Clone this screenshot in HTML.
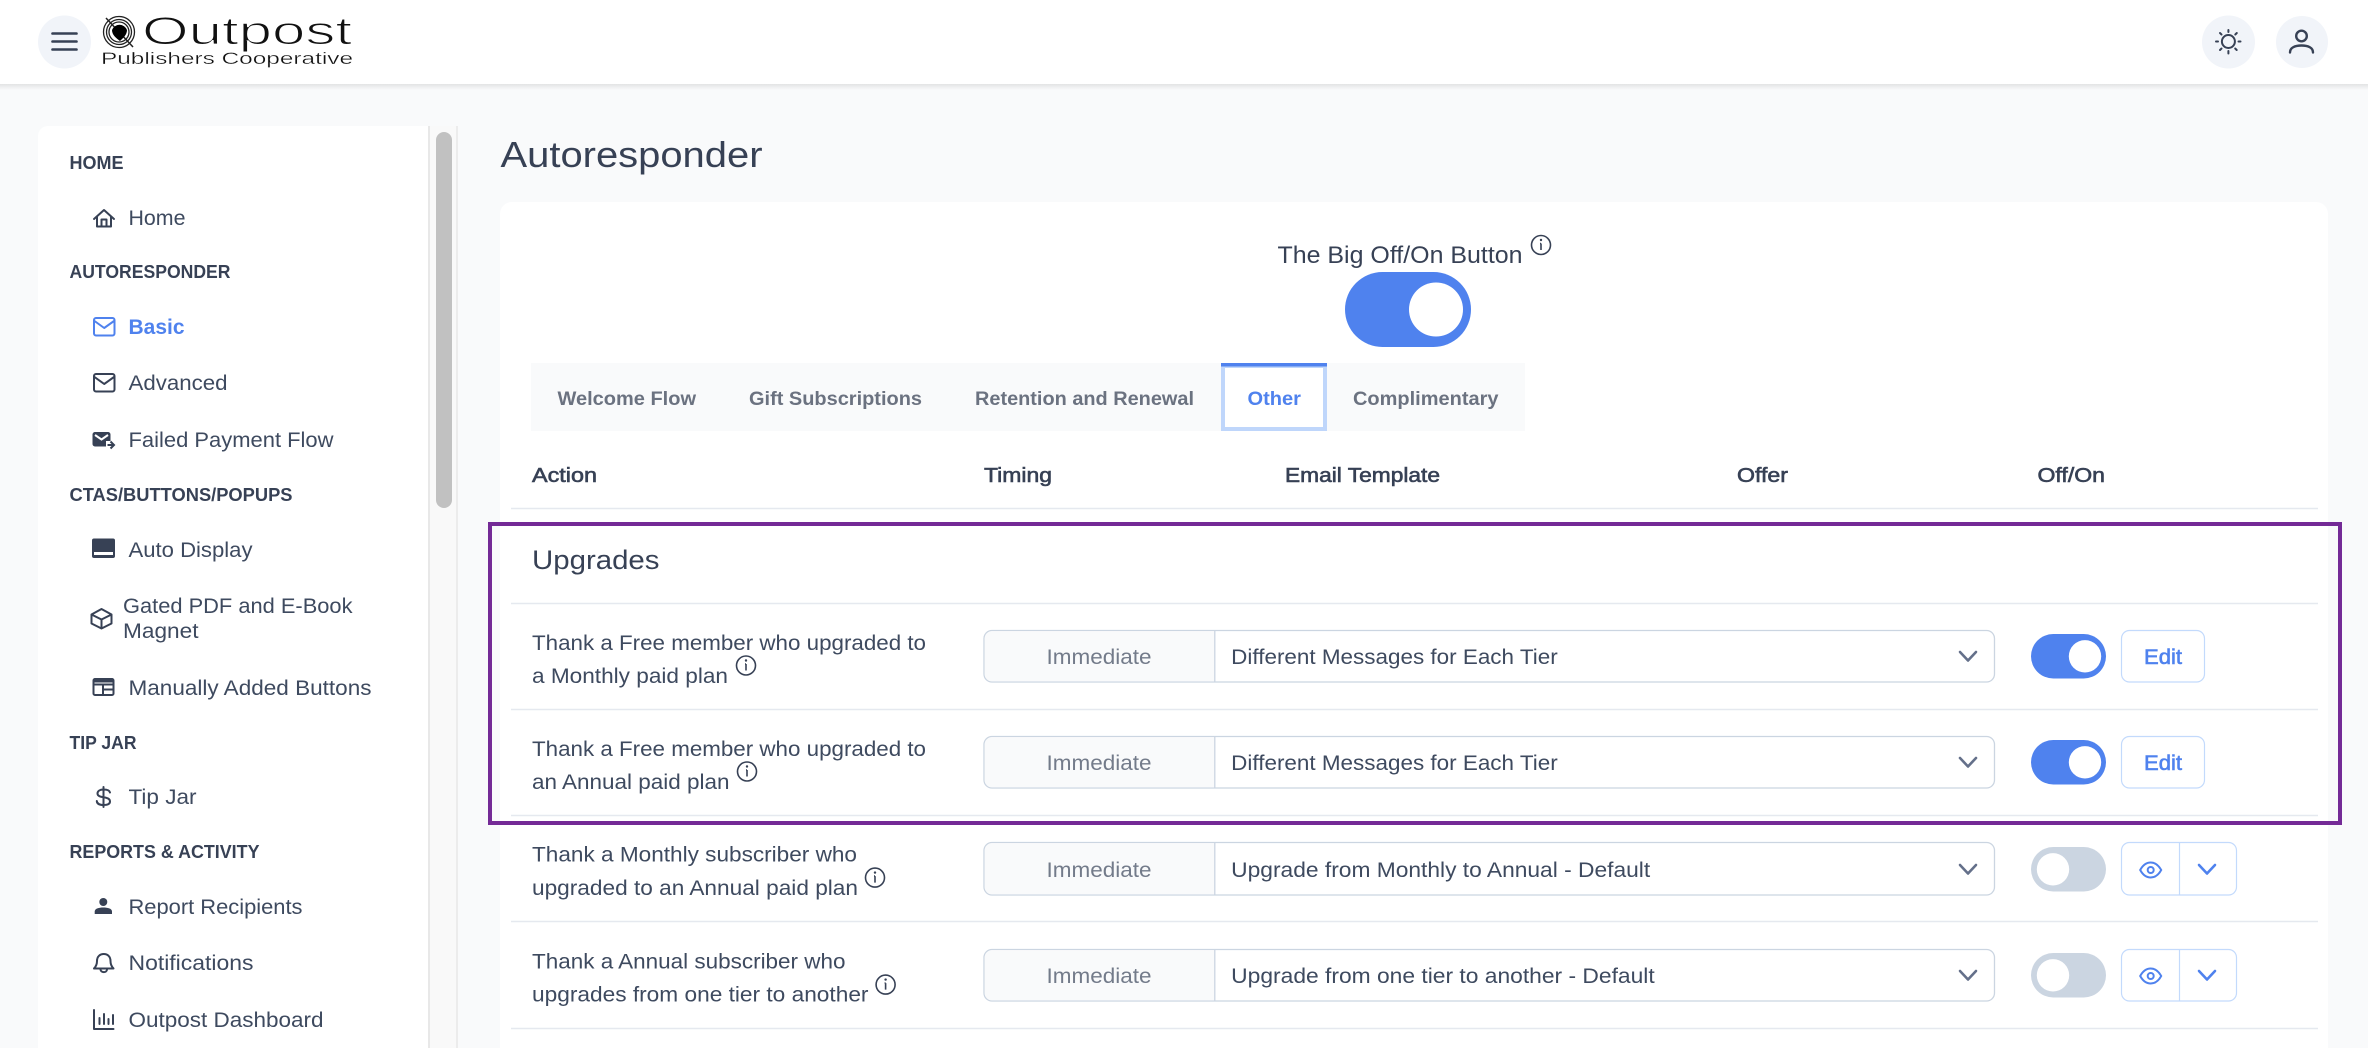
<!DOCTYPE html>
<html lang="en">
<head>
<meta charset="utf-8">
<title>Autoresponder</title>
<style>
html,body{margin:0;padding:0;width:2368px;height:1048px;overflow:hidden;background:#f9fafb}
svg{display:block}
text{font-family:"Liberation Sans",Arial,sans-serif;fill:#374155}
.n{font-size:21px;fill:#3e4a5f;transform:translateX(-.5px)}
.h{font-size:18px;font-weight:700;transform:translateX(-.5px)}
.t{font-size:19px;font-weight:700;fill:#6b7280}
.c{font-size:20px;stroke:#374155;stroke-width:.6}
.i{fill:none;stroke:#374155;stroke-width:2;stroke-linecap:round;stroke-linejoin:round}
.ln{stroke:#e5e9ef;stroke-width:1.5}
.sel{fill:#fff;stroke:#cbd5e1;stroke-width:1.3}
.imm{font-size:21px;fill:#737b8a;transform:translateX(.5px)}
.chev{fill:none;stroke:#64708a;stroke-width:2.6;stroke-linecap:round;stroke-linejoin:round}
.bchev{fill:none;stroke:#4f82ee;stroke-width:2.6;stroke-linecap:round;stroke-linejoin:round}
.btn{fill:#fff;stroke:#c3dafc;stroke-width:1.2}
.info{fill:none;stroke:#374155;stroke-width:1.6}
.edit{font-size:21px;fill:#4f82ee;stroke:#4f82ee;stroke-width:.6}
.sh{transform:translateX(-.5px)}
</style>
</head>
<body>
<svg xmlns="http://www.w3.org/2000/svg" width="2368" height="1048" viewBox="0 0 2368 1048">
<defs>
<linearGradient id="sh" x1="0" y1="0" x2="0" y2="1"><stop offset="0" stop-color="#000" stop-opacity=".09"/><stop offset="1" stop-color="#000" stop-opacity="0"/></linearGradient>
<g id="inf"><circle r="9.5" class="info"/><path d="M0-1.5V5M-1 -1.5H0" class="info"/><circle cy="-5" r="1.2" fill="#374155"/></g>
<path id="eye" d="M-10.5 0C-7.5-5.5-3.5-7.5 0-7.5S7.5-5.5 10.5 0C7.5 5.5 3.5 7.5 0 7.5S-7.5 5.5-10.5 0Z" fill="none" stroke="#4f82ee" stroke-width="2"/>
</defs>

<!-- page bg -->
<rect width="2368" height="1048" fill="#f9fafb"/>

<!-- header -->
<rect width="2368" height="84" fill="#fff"/>
<rect y="84" width="2368" height="6" fill="url(#sh)"/>
<circle cx="64.500" cy="42" r="26.500" fill="#f1f4f9"/>
<path d="M52.500 33.500H76.500M52.500 41.500H76.500M52.500 49.500H76.500" stroke="#374155" stroke-width="2.600" stroke-linecap="round"/>

<!-- logo -->
<g fill="none" stroke="#222" stroke-width="1.300">
<circle cx="119" cy="32" r="15.500"/><circle cx="119" cy="32" r="12.500"/><circle cx="119" cy="32" r="10"/>
<path d="M106 18L133 47" stroke-width="1.500"/>
</g>
<path d="M112 30a8 8 0 0 1 15 0c0 5-4 8-7 11c-4-3-8-6-8-11z" fill="#000"/>
<text x="142" y="44" font-size="39" textLength="210" lengthAdjust="spacingAndGlyphs" style="fill:#111;stroke:#fff;stroke-width:1.1">Outpost</text>
<text x="101" y="64" font-size="17" textLength="252" lengthAdjust="spacingAndGlyphs" style="fill:#111;stroke:#fff;stroke-width:.3">Publishers Cooperative</text>

<!-- header right -->
<circle cx="2228.500" cy="42" r="26.500" fill="#f1f4f9"/>
<circle cx="2228.400" cy="41.500" r="6.500" class="i"/>
<path class="i" d="M2228.400 30v2M2228.400 51v2.500M2216 41.500h2M2238.500 41.500h2M2220 33l1.500 1.500M2235.200 48.500l1.500 1.500M2236.800 33l-1.500 1.500M2221.500 48.500L2220 50"/>
<circle cx="2302" cy="42" r="26" fill="#f1f4f9"/>
<circle cx="2301.500" cy="36" r="5.300" class="i" style="stroke-width:2.400"/>
<path class="i" style="stroke-width:2.400" d="M2290 52.500c0-5 5-7 11.500-7s11.500 2 11.500 7"/>

<!-- sidebar -->
<path d="M38 1048V136a10 10 0 0 1 10-10H428V1048Z" fill="#fff"/>
<rect x="428" y="126" width="30" height="922" fill="#f9f9f9"/>
<rect x="428" y="126" width="2" height="922" fill="#e8e8e8"/>
<rect x="456" y="126" width="2" height="922" fill="#ececec"/>
<rect x="436" y="132" width="16" height="376" rx="8" fill="#c1c1c1"/>

<text class="h" x="70" y="169" textLength="54" lengthAdjust="spacingAndGlyphs">HOME</text>
<text class="n" x="129" y="225" textLength="57" lengthAdjust="spacingAndGlyphs">Home</text>
<text class="h" x="70" y="278" textLength="161" lengthAdjust="spacingAndGlyphs">AUTORESPONDER</text>
<text class="n" x="129" y="334" textLength="56" lengthAdjust="spacingAndGlyphs" style="fill:#4f82ee;font-weight:700">Basic</text>
<text class="n" x="129" y="390" textLength="99" lengthAdjust="spacingAndGlyphs">Advanced</text>
<text class="n" x="129" y="447" textLength="205" lengthAdjust="spacingAndGlyphs">Failed Payment Flow</text>
<text class="h" x="70" y="501" textLength="223" lengthAdjust="spacingAndGlyphs">CTAS/BUTTONS/POPUPS</text>
<text class="n" x="129" y="557" textLength="124" lengthAdjust="spacingAndGlyphs">Auto Display</text>
<text class="n" x="123.500" y="613" textLength="229.500" lengthAdjust="spacingAndGlyphs">Gated PDF and E-Book</text>
<text class="n" x="123.500" y="638" textLength="75.500" lengthAdjust="spacingAndGlyphs">Magnet</text>
<text class="n" x="129" y="695" textLength="243" lengthAdjust="spacingAndGlyphs">Manually Added Buttons</text>
<text class="h" x="70" y="749" textLength="67" lengthAdjust="spacingAndGlyphs">TIP JAR</text>
<text class="n" x="129" y="804" textLength="68" lengthAdjust="spacingAndGlyphs">Tip Jar</text>
<text class="h" x="70" y="858" textLength="190" lengthAdjust="spacingAndGlyphs">REPORTS &amp; ACTIVITY</text>
<text class="n" x="129" y="914" textLength="174" lengthAdjust="spacingAndGlyphs">Report Recipients</text>
<text class="n" x="129" y="970" textLength="125" lengthAdjust="spacingAndGlyphs">Notifications</text>
<text class="n" x="129" y="1027" textLength="195" lengthAdjust="spacingAndGlyphs">Outpost Dashboard</text>

<!-- sidebar icons -->
<path class="i" d="M94 219L104 210L114 219M97 217V226.500H111V217M101.500 226.500V219.500H106.500V226.500"/>
<g fill="none" stroke="#4f82ee" stroke-width="2" stroke-linejoin="round"><rect x="94" y="318" width="20.500" height="17.500" rx="2"/><path d="M94.500 321L104.200 328L114 321"/></g>
<g class="i"><rect x="94" y="374" width="20.500" height="17.500" rx="2"/><path d="M94.500 377L104.200 384L114 377"/></g>
<path d="M95 432H108a2.500 2.500 0 0 1 2.500 2.500V441H106V446.500H95a2.500 2.500 0 0 1-2.500-2.500V434.500A2.500 2.500 0 0 1 95 432Z" fill="#374155"/>
<path d="M95 435L101.500 439.500L108 435" fill="none" stroke="#fff" stroke-width="2"/>
<path d="M107.500 445H113.500M110.500 441.500L114 445L110.500 448.500" fill="none" stroke="#374155" stroke-width="2"/>
<rect x="92" y="538.500" width="23" height="19.500" rx="2" fill="#374155"/>
<rect x="94" y="552" width="19" height="3" fill="#fff"/>
<path class="i" d="M101.500 609L111.500 614.500V623.500L101.500 628.500L91.500 623.500V614.500ZM91.500 614.500L101.500 619.500L111.500 614.500M101.500 619.500V628.500"/>
<g class="i"><rect x="93.500" y="679" width="20" height="16" rx="1.500"/><path d="M93.500 684.500H113.500M103 684.500V695M103 689.500H113.500"/></g>
<path d="M93.500 679.500h20v3h-20z" fill="#374155"/>
<path class="i" d="M103.500 787V807M110 792.500C109.500 790 107 789.500 103.500 789.500C100 789.500 97.500 791 97.500 793.500C97.500 799 110 795.500 110 801.500C110 804 107 805 103.500 805C100 805 97 804 96.800 801"/>
<circle cx="103.300" cy="902" r="4" fill="#374155"/>
<path d="M94.700 914V911.500C94.700 908.500 99 907.500 103.300 907.500S112 908.500 112 911.500V914Z" fill="#374155"/>
<path class="i" d="M94 968.500H113.500C111 966 110.500 964 110.500 961C110.500 956.500 107.500 954 103.800 954C100 954 97 956.500 97 961C97 964 96.500 966 94 968.500ZM100.500 969.500C100.800 973 106.800 973 107 969.500"/>
<path class="i" d="M94 1010V1029H113.500M99.500 1024V1018M104 1024V1014M108.500 1024V1019M113 1024V1015"/>

<!-- main -->
<text class="sh" x="501" y="167" font-size="36" textLength="262" lengthAdjust="spacingAndGlyphs">Autoresponder</text>
<path d="M500 1048V214a12 12 0 0 1 12-12H2316a12 12 0 0 1 12 12V1048Z" fill="#fff"/>

<text class="sh" x="1278" y="263" font-size="24" textLength="245" lengthAdjust="spacingAndGlyphs">The Big Off/On Button</text>
<use href="#inf" x="1541" y="245"/>
<rect x="1345" y="272" width="126" height="75" rx="37.500" fill="#4f82ee"/>
<circle cx="1436" cy="309.500" r="27" fill="#fff"/>

<!-- tabs -->
<rect x="531" y="363" width="994" height="68" fill="#f9fafb"/>
<rect x="1223" y="366" width="102" height="63" fill="#fff" stroke="#bfd6fb" stroke-width="4"/>
<rect x="1221" y="363" width="106" height="3.500" fill="#4f82ee"/>
<text class="t" x="557.500" y="405" textLength="138.500" lengthAdjust="spacingAndGlyphs">Welcome Flow</text>
<text class="t" x="749" y="405" textLength="173" lengthAdjust="spacingAndGlyphs">Gift Subscriptions</text>
<text class="t" x="975" y="405" textLength="219" lengthAdjust="spacingAndGlyphs">Retention and Renewal</text>
<text class="t" x="1247.500" y="405" textLength="53.500" lengthAdjust="spacingAndGlyphs" style="fill:#4f82ee">Other</text>
<text class="t" x="1353" y="405" textLength="145.500" lengthAdjust="spacingAndGlyphs">Complimentary</text>

<!-- column heads -->
<text class="c" x="532" y="482" textLength="65" lengthAdjust="spacingAndGlyphs">Action</text>
<text class="c" x="984" y="482" textLength="68" lengthAdjust="spacingAndGlyphs">Timing</text>
<text class="c" x="1285" y="482" textLength="155" lengthAdjust="spacingAndGlyphs">Email Template</text>
<text class="c" x="1737" y="482" textLength="51" lengthAdjust="spacingAndGlyphs">Offer</text>
<text class="c" x="2037.500" y="482" textLength="67.500" lengthAdjust="spacingAndGlyphs">Off/On</text>
<path class="ln" d="M511 508.500H2318M511 603.500H2318M511 709.500H2318M511 815.500H2318M511 921.500H2318M511 1028.500H2318"/>

<text class="sh" x="532.500" y="569" font-size="27" textLength="127.500" lengthAdjust="spacingAndGlyphs">Upgrades</text>

<!-- row 1 -->
<text class="n" x="532.500" y="650" textLength="394" lengthAdjust="spacingAndGlyphs">Thank a Free member who upgraded to</text>
<text class="n" x="532.500" y="683" textLength="196" lengthAdjust="spacingAndGlyphs">a Monthly paid plan</text>
<use href="#inf" x="746" y="665.500"/>
<path class="sel" d="M992 630.500H1986.500a8 8 0 0 1 8 8V674a8 8 0 0 1-8 8H992a8 8 0 0 1-8-8V638.500a8 8 0 0 1 8-8Z"/>
<path d="M992 631.200H1214.500V681.300H992a7.300 7.300 0 0 1-7.300-7.300V638.500a7.300 7.300 0 0 1 7.300-7.300Z" fill="#f9fafb"/>
<path d="M1214.800 630.500V682" stroke="#cbd5e1" stroke-width="1.300"/>
<text class="imm" x="1046" y="664" textLength="105" lengthAdjust="spacingAndGlyphs">Immediate</text>
<text class="n" x="1231.700" y="664" textLength="326.500" lengthAdjust="spacingAndGlyphs">Different Messages for Each Tier</text>
<path class="chev" d="M1960 652L1968 660.500L1976 652"/>
<rect x="2031" y="634" width="75" height="44.500" rx="22.250" fill="#4f82ee"/>
<circle cx="2085" cy="656.300" r="16.200" fill="#fff"/>
<rect class="btn" x="2121.500" y="630.500" width="83" height="51.500" rx="8"/>
<text class="edit" x="2144" y="664" textLength="38" lengthAdjust="spacingAndGlyphs">Edit</text>

<!-- row 2 -->
<text class="n" x="532.500" y="756" textLength="394" lengthAdjust="spacingAndGlyphs">Thank a Free member who upgraded to</text>
<text class="n" x="532.500" y="789" textLength="197.500" lengthAdjust="spacingAndGlyphs">an Annual paid plan</text>
<use href="#inf" x="747" y="771.500"/>
<path class="sel" d="M992 736.500H1986.500a8 8 0 0 1 8 8V780a8 8 0 0 1-8 8H992a8 8 0 0 1-8-8V744.500a8 8 0 0 1 8-8Z"/>
<path d="M992 737.200H1214.500V787.300H992a7.300 7.300 0 0 1-7.300-7.300V744.500a7.300 7.300 0 0 1 7.300-7.300Z" fill="#f9fafb"/>
<path d="M1214.800 736.500V788" stroke="#cbd5e1" stroke-width="1.300"/>
<text class="imm" x="1046" y="770" textLength="105" lengthAdjust="spacingAndGlyphs">Immediate</text>
<text class="n" x="1231.700" y="770" textLength="326.500" lengthAdjust="spacingAndGlyphs">Different Messages for Each Tier</text>
<path class="chev" d="M1960 758L1968 766.500L1976 758"/>
<rect x="2031" y="740" width="75" height="44.500" rx="22.250" fill="#4f82ee"/>
<circle cx="2085" cy="762.300" r="16.200" fill="#fff"/>
<rect class="btn" x="2121.500" y="736.500" width="83" height="51.500" rx="8"/>
<text class="edit" x="2144" y="770" textLength="38" lengthAdjust="spacingAndGlyphs">Edit</text>

<!-- row 3 -->
<text class="n" x="532.500" y="861.500" textLength="325" lengthAdjust="spacingAndGlyphs">Thank a Monthly subscriber who</text>
<text class="n" x="532.500" y="895" textLength="326" lengthAdjust="spacingAndGlyphs">upgraded to an Annual paid plan</text>
<use href="#inf" x="875" y="877.600"/>
<path class="sel" d="M992 842.500H1986.500a8 8 0 0 1 8 8V887a8 8 0 0 1-8 8H992a8 8 0 0 1-8-8V850.500a8 8 0 0 1 8-8Z"/>
<path d="M992 843.200H1214.500V894.300H992a7.300 7.300 0 0 1-7.300-7.300V850.500a7.300 7.300 0 0 1 7.300-7.300Z" fill="#f9fafb"/>
<path d="M1214.800 842.500V895" stroke="#cbd5e1" stroke-width="1.300"/>
<text class="imm" x="1046" y="877" textLength="105" lengthAdjust="spacingAndGlyphs">Immediate</text>
<text class="n" x="1231.700" y="877" textLength="419" lengthAdjust="spacingAndGlyphs">Upgrade from Monthly to Annual - Default</text>
<path class="chev" d="M1960 865L1968 873.500L1976 865"/>
<rect x="2031" y="847" width="75" height="44.500" rx="22.250" fill="#cbd5e1"/>
<circle cx="2053" cy="869.300" r="16.200" fill="#fff"/>
<rect class="btn" x="2121.500" y="842.500" width="115" height="52.500" rx="8"/>
<path d="M2179.500 842.500V895" stroke="#c3dafc" stroke-width="1.200"/>
<use href="#eye" x="2150.700" y="870"/><circle cx="2150.700" cy="870" r="3" fill="none" stroke="#4f82ee" stroke-width="2"/>
<path class="bchev" d="M2199 865L2207 873.500L2215 865"/>

<!-- row 4 -->
<text class="n" x="532.500" y="968.500" textLength="313.500" lengthAdjust="spacingAndGlyphs">Thank a Annual subscriber who</text>
<text class="n" x="532.500" y="1001.500" textLength="336.500" lengthAdjust="spacingAndGlyphs">upgrades from one tier to another</text>
<use href="#inf" x="885.600" y="984.600"/>
<path class="sel" d="M992 949.500H1986.500a8 8 0 0 1 8 8V993a8 8 0 0 1-8 8H992a8 8 0 0 1-8-8V957.500a8 8 0 0 1 8-8Z"/>
<path d="M992 950.200H1214.500V1000.300H992a7.300 7.300 0 0 1-7.300-7.300V957.500a7.300 7.300 0 0 1 7.300-7.300Z" fill="#f9fafb"/>
<path d="M1214.800 949.500V1001" stroke="#cbd5e1" stroke-width="1.300"/>
<text class="imm" x="1046" y="983" textLength="105" lengthAdjust="spacingAndGlyphs">Immediate</text>
<text class="n" x="1231.700" y="983" textLength="423.500" lengthAdjust="spacingAndGlyphs">Upgrade from one tier to another - Default</text>
<path class="chev" d="M1960 971L1968 979.500L1976 971"/>
<rect x="2031" y="953" width="75" height="44.500" rx="22.250" fill="#cbd5e1"/>
<circle cx="2053" cy="975.300" r="16.200" fill="#fff"/>
<rect class="btn" x="2121.500" y="949.500" width="115" height="51.500" rx="8"/>
<path d="M2179.500 949.500V1001" stroke="#c3dafc" stroke-width="1.200"/>
<use href="#eye" x="2150.700" y="976"/><circle cx="2150.700" cy="976" r="3" fill="none" stroke="#4f82ee" stroke-width="2"/>
<path class="bchev" d="M2199 971L2207 979.500L2215 971"/>

<!-- highlight box -->
<rect x="490" y="524" width="1850" height="299" fill="none" stroke="#742a96" stroke-width="4"/>
</svg>
</body>
</html>
